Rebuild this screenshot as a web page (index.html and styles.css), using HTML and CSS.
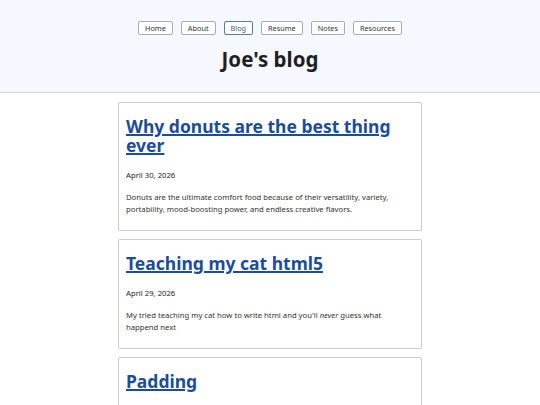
FILE: index.html
```html
<!DOCTYPE html>
<html lang="en">
<head>
<meta charset="utf-8">
<title>Joe's blog</title>
<link rel="stylesheet" href="styles.css">
</head>
<body>
<header class="site-header">
  <nav class="nav">
    <a class="nav-btn" href="#">Home</a>
    <a class="nav-btn" href="#">About</a>
    <a class="nav-btn active" href="#">Blog</a>
    <a class="nav-btn" href="#">Resume</a>
    <a class="nav-btn" href="#">Notes</a>
    <a class="nav-btn" href="#">Resources</a>
  </nav>
  <h1 class="site-title">Joe's blog</h1>
</header>
<main class="posts">
  <article class="post">
    <h2 class="post-title"><a href="#">Why donuts are the best thing ever</a></h2>
    <p class="post-date">April 30, 2026</p>
    <p class="post-summary">Donuts are the ultimate comfort food because of their versatility, variety, portability, mood-boosting power, and endless creative flavors.</p>
  </article>
  <article class="post">
    <h2 class="post-title"><a href="#">Teaching my cat html5</a></h2>
    <p class="post-date">April 29, 2026</p>
    <p class="post-summary">My tried teaching my cat how to write html and you'll <em>never</em> guess what happend next</p>
  </article>
  <article class="post">
    <h2 class="post-title"><a href="#">Padding</a></h2>
    <p class="post-date">April 28, 2026</p>
    <p class="post-summary">Padding.</p>
  </article>
</main>
</body>
</html>
```
FILE: styles.css
```css
* { box-sizing: border-box; }
html, body {
  margin: 0;
  padding: 0;
  background: #ffffff;
  font-family: "Noto Sans", sans-serif;
  font-size: 7.7px;
  line-height: 12px;
  color: #222;
}
.site-header {
  background: #f5f8fe;
  border-bottom: 1px solid #d4d6da;
  padding: 21px 0 19px;
  text-align: center;
}
.nav {
  display: flex;
  justify-content: center;
  gap: 8px;
}
.nav-btn {
  display: inline-block;
  height: 14px;
  line-height: 12px;
  padding: 0 6px;
  border: 1px solid #a9adb3;
  border-radius: 2px;
  background: #fff;
  color: #333;
  font-size: 7.3px;
  text-decoration: none;
}
.nav-btn.active {
  border-color: #5b79ad;
  color: #3a5a99;
}
.site-title {
  margin: 10px 0 0;
  font-size: 20.5px;
  line-height: 28px;
  font-weight: 700;
  color: #1f1f1f;
}
.posts {
  width: 304px;
  margin: 9px auto 0;
  display: flex;
  flex-direction: column;
  gap: 8px;
}
.post {
  border: 1px solid #c9cbce;
  border-radius: 2px;
  padding: 14px 7px 15px;
  background: #fff;
}
.post-title {
  margin: 0;
  font-size: 17.5px;
  line-height: 19px;
  font-weight: 700;
}
.post-title a {
  color: #1b4d9b;
  text-decoration: underline;
  text-decoration-thickness: 1.5px;
}
.post-date {
  margin: 14px 0 0;
  color: #222;
}
.post-summary {
  margin: 10px 0 0;
  color: #333;
}
```
